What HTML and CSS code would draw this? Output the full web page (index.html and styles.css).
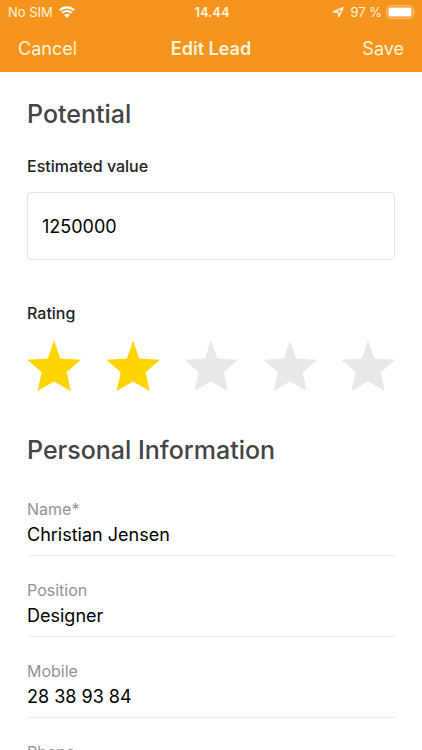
FILE: index.html
```html
<!DOCTYPE html>
<html lang="en">
<head>
    <meta charset="UTF-8">
    <meta name="viewport" content="width=device-width, initial-scale=1.0">
    <title>Edit Lead</title>
    <link rel="stylesheet" href="styles.css">
</head>
<body>
    <header class="header">
        <!-- Status bar -->
        <div class="status-bar">
            <div class="status-left">
                <span>No SIM</span>
                <svg class="wifi-icon" width="16" height="12" viewBox="0 0 16 12" aria-hidden="true">
                    <path d="M0.9 4.2a10.2 10.2 0 0 1 14.2 0M3.3 6.9a6.8 6.8 0 0 1 9.4 0" fill="none" stroke="currentColor" stroke-width="2.2"/>
                    <path d="M8 11.8 5.1 9a4 4 0 0 1 5.8 0z" fill="currentColor"/>
                </svg>
            </div>
            <div class="status-time">14.44</div>
            <div class="status-right">
                <svg width="12" height="12" viewBox="0 0 12 12" aria-hidden="true">
                    <path d="M11 1.6 1.4 6h4.8l.6 4.6z" fill="none" stroke="currentColor" stroke-width="1.4" stroke-linejoin="round"/>
                </svg>
                <span class="battery-text">97 %</span>
                <svg width="30" height="14" viewBox="0 0 30 14" aria-hidden="true">
                    <rect x="0.75" y="0.75" width="26.5" height="12.5" rx="3.5" fill="none" stroke="#fff" stroke-opacity="0.45" stroke-width="1"/>
                    <rect x="2.5" y="2.5" width="23" height="9" rx="1.5" fill="#fff"/>
                    <path d="M28.5 4.7q1.4 2.3 0 4.6z" fill="#fff" fill-opacity="0.6"/>
                </svg>
            </div>
        </div>

        <!-- Navigation bar -->
        <nav class="nav-bar">
            <button type="button" class="nav-button">Cancel</button>
            <h1 class="nav-title">Edit Lead</h1>
            <button type="submit" form="leadForm" class="nav-button nav-save">Save</button>
        </nav>
    </header>

    <svg class="symbols" aria-hidden="true">
        <symbol id="star" viewBox="0 0 54 52">
            <path d="M27 .5 33.3 18.6 54 19.7 39.7 32.2 43.7 51 27 41.4 10.6 51 14.7 32.2.3 19.7 20.9 18.6z"/>
        </symbol>
    </svg>

    <form id="leadForm" class="lead-form">
        <section>
            <h2 class="section-title">Potential</h2>
            <label class="label" for="value">Estimated value</label>
            <input class="value-input" type="text" id="value" inputmode="numeric" value="1250000">

            <div class="label rating-label" id="ratingLabel">Rating</div>
            <div class="rating" role="radiogroup" aria-labelledby="ratingLabel">
                <label class="star">
                    <input type="radio" name="rating" value="1" aria-label="1 star">
                    <svg><use href="#star"/></svg>
                </label>
                <label class="star">
                    <input type="radio" name="rating" value="2" aria-label="2 stars" checked>
                    <svg><use href="#star"/></svg>
                </label>
                <label class="star">
                    <input type="radio" name="rating" value="3" aria-label="3 stars">
                    <svg><use href="#star"/></svg>
                </label>
                <label class="star">
                    <input type="radio" name="rating" value="4" aria-label="4 stars">
                    <svg><use href="#star"/></svg>
                </label>
                <label class="star">
                    <input type="radio" name="rating" value="5" aria-label="5 stars">
                    <svg><use href="#star"/></svg>
                </label>
            </div>
        </section>

        <section class="personal">
            <h2 class="section-title">Personal Information</h2>
            <div class="field">
                <label for="name">Name*</label>
                <input type="text" id="name" value="Christian Jensen" required>
            </div>
            <div class="field">
                <label for="position">Position</label>
                <input type="text" id="position" value="Designer">
            </div>
            <div class="field">
                <label for="mobile">Mobile</label>
                <input type="tel" id="mobile" value="28 38 93 84">
            </div>
            <div class="field">
                <label for="phone">Phone</label>
                <input type="tel" id="phone">
            </div>
        </section>
    </form>
</body>
</html>
```
FILE: styles.css
```css
* {
    box-sizing: border-box;
}
body {
    margin: 0;
    height: 100vh;
    display: flex;
    flex-direction: column;
    font-family: Inter, "Liberation Sans", sans-serif;
    background-color: #fff;
    color: #000;
}
.header {
    flex: none;
    background-color: #f7941e;
    color: #fff4dc;
}
.status-bar {
    display: grid;
    grid-template-columns: 1fr auto 1fr;
    align-items: center;
    height: 24px;
    padding: 0 6px 0 8px;
    font-size: 13px;
}
.status-left, .status-right {
    display: flex;
    align-items: center;
    gap: 6px;
}
.status-right {
    justify-content: flex-end;
    gap: 4px;
}
.wifi-icon {
    color: #fff;
}
.battery-text {
    margin-left: 2px;
}
.status-time {
    font-weight: 600;
}
.nav-bar {
    display: grid;
    grid-template-columns: 1fr auto 1fr;
    align-items: center;
    height: 48px;
    padding: 0 18px;
}
.nav-button {
    justify-self: start;
    padding: 0;
    border: 0;
    background: none;
    font-family: inherit;
    font-size: 18px;
    color: inherit;
}
.nav-save {
    justify-self: end;
}
.nav-title {
    margin: 0;
    font-size: 18px;
    font-weight: 600;
}
.symbols {
    display: none;
}
.lead-form {
    flex: 1;
    min-height: 0;
    overflow-y: auto;
    scrollbar-width: none;
    padding: 26px 27px 0;
}
.section-title {
    margin: 0;
    font-size: 25px;
    line-height: 32px;
    font-weight: 500;
    color: #444;
}
.label {
    display: block;
    margin-top: 26px;
    font-size: 16px;
    line-height: 20px;
    font-weight: 500;
    color: #222;
}
.value-input {
    display: block;
    width: 100%;
    height: 68px;
    margin-top: 16px;
    padding: 0 14px;
    border: 1px solid #e4e4e4;
    border-radius: 4px;
    font-family: inherit;
    font-size: 18px;
    color: #000;
}
.rating-label {
    margin-top: 43px;
}
.rating {
    display: flex;
    justify-content: space-between;
    margin-top: 17px;
}
.star {
    display: grid;
    cursor: pointer;
}
.star input, .star svg {
    grid-area: 1 / 1;
    width: 54px;
    height: 52px;
    margin: 0;
}
.star input {
    appearance: none;
}
.star svg {
    fill: #ffd500;
}
/* every star after the chosen one is empty */
.star:has(input:checked) ~ .star svg {
    fill: #e9e9e9;
}
.personal {
    margin-top: 42px;
}
.personal .section-title {
    margin-bottom: 32px;
}
.field {
    height: 58px;
    margin: 0 -1px 23px 0;
    border-bottom: 1px solid #ededed;
}
.field label {
    display: block;
    font-size: 16px;
    line-height: 22px;
    color: #929297;
}
.field input {
    display: block;
    width: 100%;
    height: 28px;
    padding: 0;
    border: 0;
    font-family: inherit;
    font-size: 18px;
    color: #000;
}
```
